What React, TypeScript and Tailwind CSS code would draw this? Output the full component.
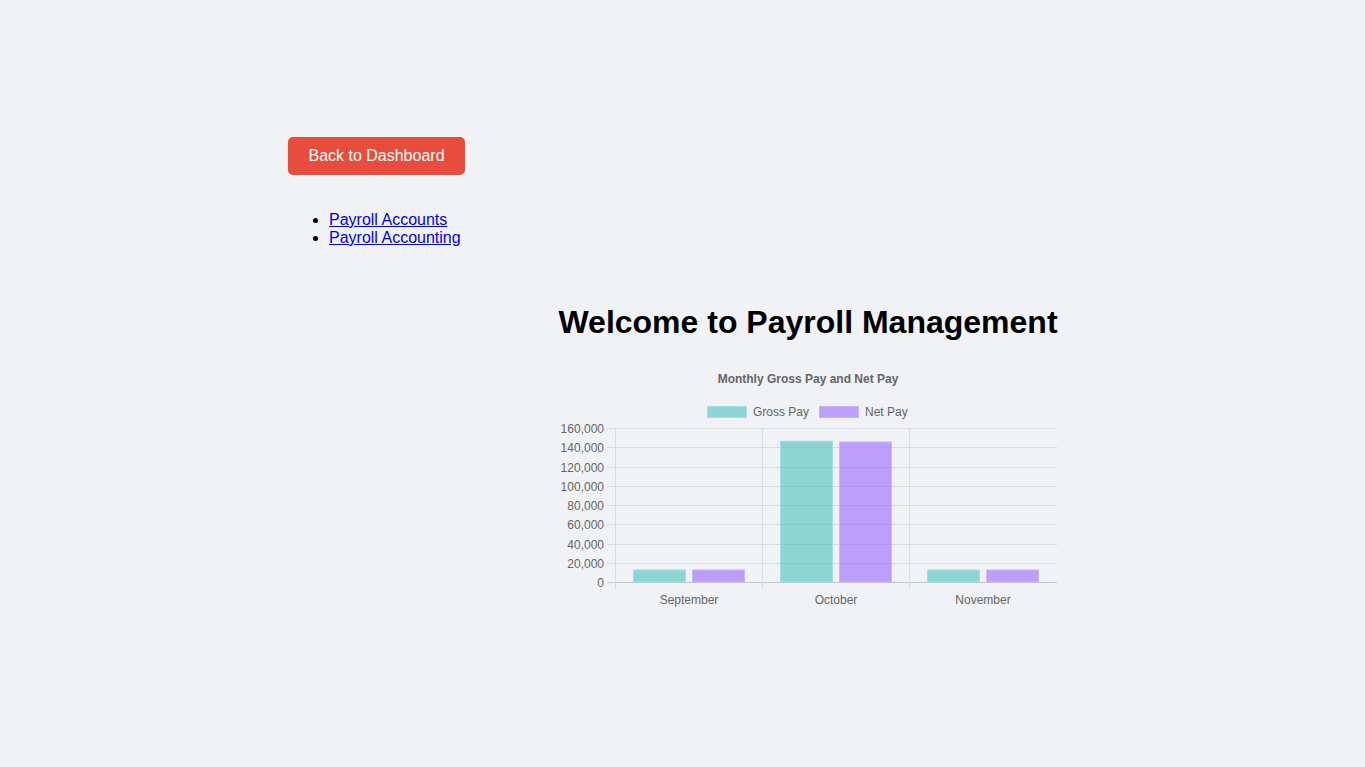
import React from "react";

const ticks = [160000, 140000, 120000, 100000, 80000, 60000, 40000, 20000, 0];
const top = 68;
const bottom = 222;
const yOf = (v: number) => bottom - (v / 160000) * (bottom - top);

const data = [
  { label: "September", gross: 12500, net: 12500 },
  { label: "October", gross: 146200, net: 145500 },
  { label: "November", gross: 12500, net: 12500 },
];

function Chart() {
  return (
    <svg width={500} height={250} viewBox="0 0 500 250" style={{ fontFamily: '"Liberation Sans", Arial, sans-serif' }}>
      <text x={250} y={23} textAnchor="middle" fontSize={12} fontWeight="bold" fill="#666">
        Monthly Gross Pay and Net Pay
      </text>
      <rect x={149.5} y={46.5} width={39} height={11} fill="rgba(75,192,192,0.6)" stroke="rgba(160,224,224,1)" />
      <text x={195} y={56} fontSize={12} fill="#666">Gross Pay</text>
      <rect x={261.5} y={46.5} width={39} height={11} fill="rgba(153,102,255,0.6)" stroke="rgba(200,180,255,1)" />
      <text x={307} y={56} fontSize={12} fill="#666">Net Pay</text>
      {ticks.map((t) => {
        const y = Math.round(yOf(t)) + 0.5;
        return (
          <g key={t}>
            <line x1={49} x2={499} y1={y} y2={y} stroke={t === 0 ? "#c4c6c9" : "#d9dbde"} strokeWidth={1} />
            <text x={46} y={y + 4} textAnchor="end" fontSize={12} fill="#666">
              {t.toLocaleString("en-US")}
            </text>
          </g>
        );
      })}
      {[57.5, 204.5, 351.5].map((x) => (
        <line key={x} x1={x} x2={x} y1={top} y2={230} stroke="#d9dbde" strokeWidth={1} />
      ))}
      {data.map((d, i) => {
        const base = 57 + i * 147;
        const gy = yOf(d.gross);
        const ny = yOf(d.net);
        return (
          <g key={d.label}>
            <rect x={base + 18.5} y={gy} width={52} height={bottom - gy} fill="rgba(75,192,192,0.6)" stroke="rgba(160,224,224,0.9)" />
            <rect x={base + 77.5} y={ny} width={52} height={bottom - ny} fill="rgba(153,102,255,0.6)" stroke="rgba(200,180,255,0.9)" />
            <text x={base + 74} y={244} textAnchor="middle" fontSize={12} fill="#666">
              {d.label}
            </text>
          </g>
        );
      })}
    </svg>
  );
}

export default function App() {
  return (
    <div className="min-h-screen bg-[#f0f2f5] pl-[288px] pt-[137px] font-['Liberation_Sans',Arial,sans-serif] text-black">
      <button className="h-[38px] w-[177px] rounded-[5px] bg-[#e74c3c] text-[16px] text-white">
        Back to Dashboard
      </button>
      <ul className="mt-[36px] list-disc pl-[41px] text-[16px] leading-[18px]">
        <li>
          <a href="#" className="text-[#0000ee] underline">Payroll Accounts</a>
        </li>
        <li>
          <a href="#" className="text-[#0000ee] underline">Payroll Accounting</a>
        </li>
      </ul>
      <div className="ml-[270px] mt-[57px] w-[500px]">
        <h1 className="whitespace-nowrap text-center text-[32px] font-bold leading-[37px]">
          Welcome to Payroll Management
        </h1>
        <div className="mt-[19px]">
          <Chart />
        </div>
      </div>
    </div>
  );
}
